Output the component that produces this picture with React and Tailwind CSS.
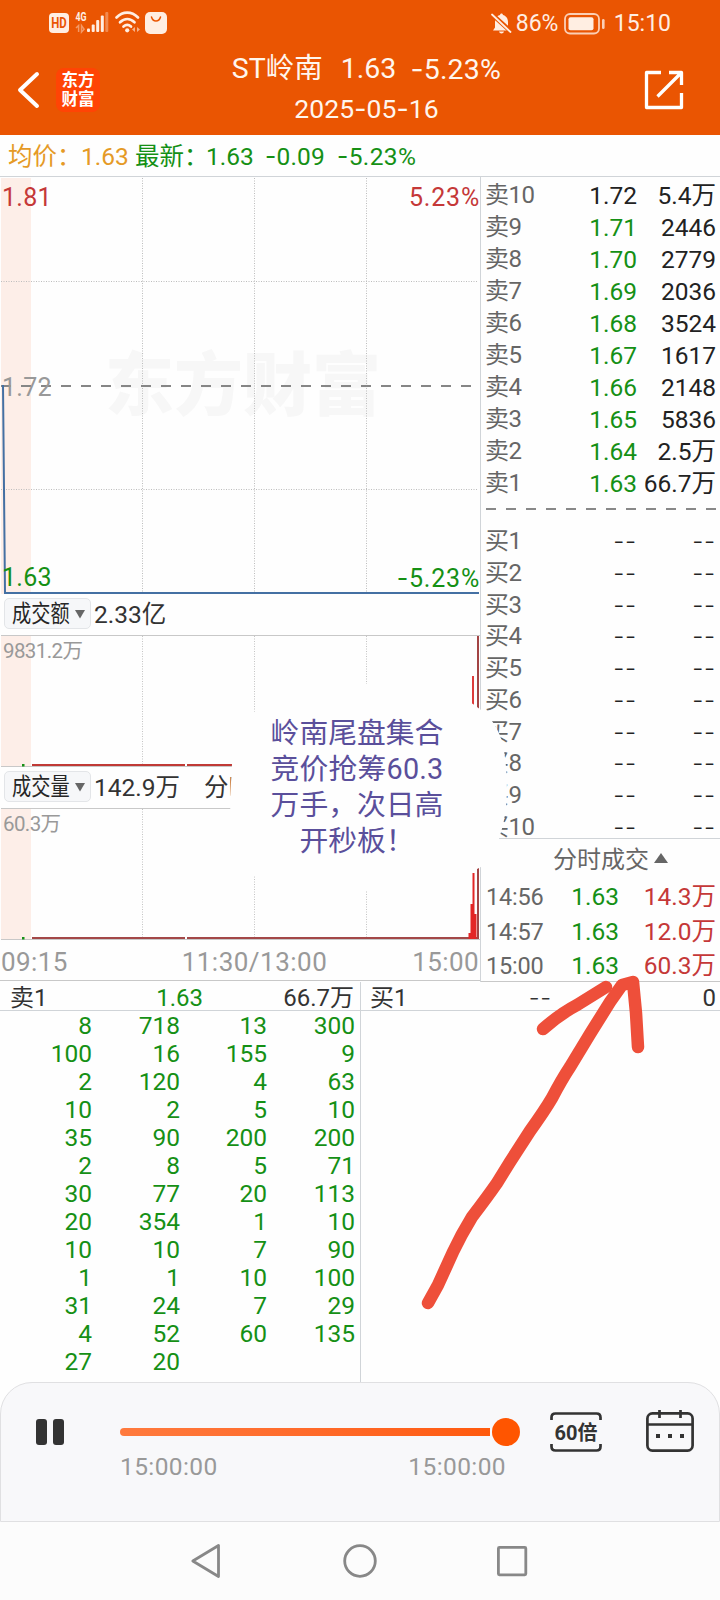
import React from "react";

const sells = [
  ["卖10", "1.72", "5.4万"], ["卖9", "1.71", "2446"], ["卖8", "1.70", "2779"],
  ["卖7", "1.69", "2036"], ["卖6", "1.68", "3524"], ["卖5", "1.67", "1617"],
  ["卖4", "1.66", "2148"], ["卖3", "1.65", "5836"], ["卖2", "1.64", "2.5万"],
  ["卖1", "1.63", "66.7万"],
];
const buys = ["买1", "买2", "买3", "买4", "买5", "买6", "买7", "买8", "买9", "买10"];
const trades = [["14:56", "1.63", "14.3万"], ["14:57", "1.63", "12.0万"], ["15:00", "1.63", "60.3万"]];
const queue = [
  [8, 718, 13, 300], [100, 16, 155, 9], [2, 120, 4, 63], [10, 2, 5, 10], [35, 90, 200, 200],
  [2, 8, 5, 71], [30, 77, 20, 113], [20, 354, 1, 10], [10, 10, 7, 90], [1, 1, 10, 100],
  [31, 24, 7, 29], [4, 52, 60, 135], [27, 20, "", ""],
];

function Dashes() {
  return <span className="font-['Inter',sans-serif] font-light tracking-[0.8px]">--</span>;
}

function Minus() {
  return <span className="font-['Inter',sans-serif]">-</span>;
}

function StatusBar() {
  return (
    <div className="flex h-[46px] items-center pl-[49px] pr-[49px] text-[#ffeee2]">
      <svg className="h-[46px] w-[120px]" viewBox="49 0 120 46">
        <rect x="49" y="13" width="20" height="20" rx="4" fill="#ffeee2" />
        <text x="59" y="28.2" textAnchor="middle" fontFamily="Roboto" fontWeight="700" fontSize="14" textLength="15.5" lengthAdjust="spacingAndGlyphs" fill="#ea5502">HD</text>
        <text x="75.5" y="20.8" fontFamily="Roboto" fontWeight="700" fontSize="12.5" textLength="11" lengthAdjust="spacingAndGlyphs" fill="#ffeee2">4G</text>
        <g fill="#ffeee2">
          <rect x="87" y="28.5" width="3" height="3.5" rx="1" />
          <rect x="91.7" y="24.5" width="3" height="7.5" rx="1" />
          <rect x="96.2" y="20" width="3" height="12" rx="1" />
          <rect x="100.8" y="15.5" width="3" height="16.5" rx="1" />
          <rect x="105.3" y="12" width="3" height="20" rx="1" opacity="0.35" />
        </g>
        <path d="M76 28l2.6-2.5v6.5M81.5 25.5v6.5l2.6-2.8z" fill="none" stroke="#ffeee2" strokeWidth="1.5" opacity="0.45" />
        <g fill="none" stroke="#ffeee2" strokeWidth="2.7" strokeLinecap="round">
          <path d="M116.5 17.5C123 11 131.5 11 138 17.5" />
          <path d="M120 22.3C124.5 18 130 18 134.5 22.3" />
          <path d="M123.5 26.5C126 24.3 128.5 24.3 131 26.5" />
        </g>
        <circle cx="127.2" cy="30.3" r="2.1" fill="#ffeee2" />
        <path d="M135 27v5l-3-2.5zM137 27v5l3-2.5z" fill="#ffeee2" opacity="0.6" />
        <rect x="145" y="12" width="22" height="22" rx="5" fill="#ffeee2" />
        <path d="M151.5 17c1.5 5.3 7.5 5.3 9 0" fill="none" stroke="#ea5502" strokeWidth="1.5" strokeLinecap="round" />
      </svg>
      <div className="ml-auto flex items-center">
        <svg className="h-[22px] w-[21px]" viewBox="0 0 21 22">
          <path d="M2 18.5h17l-2-3V10c0-4-2.5-6.3-5-6.9C12 1 9 1 9 3.1 6 3.7 4 6 4 10v5.5zM8 19.5h5c-.5 2.5-4.5 2.5-5 0z" fill="#ffeee2" />
          <path d="M.5 2l20 18" stroke="#ea5502" strokeWidth="4.5" />
          <path d="M1 2.5l18.5 17.5" stroke="#ffeee2" strokeWidth="1.8" strokeLinecap="round" />
        </svg>
        <span className="ml-[4px] w-[48px] whitespace-nowrap pt-px text-[23px] leading-[46px]">86%</span>
        <svg className="mt-px h-[22px] w-[42px]" viewBox="0 0 42 22">
          <rect x="1" y="1" width="34" height="19.5" rx="5" fill="none" stroke="#ffeee2" strokeOpacity="0.8" strokeWidth="1.8" />
          <rect x="4.5" y="4.3" width="25" height="13" rx="2" fill="#ffeee2" />
          <rect x="38" y="6" width="2.6" height="10" rx="1.3" fill="#ffeee2" fillOpacity="0.8" />
        </svg>
        <span className="ml-[8px] pt-px text-[23px] leading-[46px]">15:10</span>
      </div>
    </div>
  );
}

function Header() {
  return (
    <header className="h-[135px] shrink-0 bg-[#ea5502]">
      <StatusBar />
      <div className="flex h-[89px] items-start text-[#fff6ee]">
        <svg className="ml-[16px] mt-[24px] h-[40px] w-[26px]" viewBox="0 0 26 40">
          <path d="M21 4L4 20l17 16" fill="none" stroke="#fff" strokeWidth="4" strokeLinecap="round" strokeLinejoin="round" />
        </svg>
        <div className="ml-[14px] mt-[22px] flex h-[44px] w-[44px] shrink-0 flex-col items-center justify-center rounded-[8px] bg-[#ff4405] pb-px text-[16.5px] font-bold leading-[19px] text-white">
          <span>东方</span>
          <span>财富</span>
        </div>
        <div className="flex flex-1 flex-col items-center pr-[11px]">
          <div className="mt-[4px] flex whitespace-pre text-[28.5px] leading-[38px]">
            <span>ST岭南</span>
            <span className="ml-[18px]">1.63</span>
            <span className="ml-[14px] tracking-[0.2px]"><Minus />5.23%</span>
          </div>
          <div className="text-[26.5px] leading-[39px] tracking-[0.1px]">2025<Minus />05<Minus />16</div>
        </div>
        <svg className="mr-[36px] mt-[24px] h-[40px] w-[40px]" viewBox="0 0 40 40">
          <path d="M17 2.5H2.5v35h35V23M25 2.5h12.5V15M36.5 3.5L13.5 26.5" fill="none" stroke="#fff" strokeWidth="3.3" strokeLinejoin="round" />
        </svg>
      </div>
    </header>
  );
}

function Dropdown({ label }) {
  return (
    <div className="flex h-[31px] w-[87px] items-center rounded-[5px] border border-[#e3e5e8] bg-[#f6f7f9] pl-[7px]">
      <span className="w-[58px] whitespace-nowrap pt-[2px] text-[24px] leading-[29px] text-[#262626]">
        <span className="inline-block origin-left scale-x-[0.8]">{label}</span>
      </span>
      <svg className="ml-[5px] mt-px h-[9px] w-[10px] shrink-0" viewBox="0 0 10 9"><path d="M0 0h10L5 8.5z" fill="#666" /></svg>
    </div>
  );
}

function PriceChart() {
  return (
    <div className="relative h-[417px] text-[25px] leading-[30px]">
      <svg className="block h-[417px] w-[480px]" viewBox="0 177 480 417">
        <rect x="1" y="178" width="30" height="416" fill="#fdeee8" />
        <text x="243" y="410" textAnchor="middle" fontFamily="'Noto Sans CJK SC', sans-serif" fontWeight="900" fontSize="69" fill="#f7f7f7">东方财富</text>
        <g stroke="#bdbdbd" strokeWidth="1" strokeDasharray="1 1.5">
          <path d="M142.5 178V593M254.5 178V593M366.5 178V593M1 281.5H478M1 489.5H478" />
        </g>
        <path d="M1 386H472" stroke="#868686" strokeWidth="2" strokeDasharray="10 10" />
        <path d="M3 385L5 593H479" fill="none" stroke="#4470a3" strokeWidth="2" />
      </svg>
      <span className="absolute left-[2px] top-[6px] tracking-[0.3px] text-[#c53838]">1.81</span>
      <span className="absolute right-0 top-[6px] tracking-[0.8px] text-[#c53838]">5.23%</span>
      <span className="absolute left-[2px] top-[196px] tracking-[0.3px] text-[#999]">1.72</span>
      <span className="absolute left-[2px] top-[386px] tracking-[0.3px] text-[#159015]">1.63</span>
      <span className="absolute right-0 top-[386px] tracking-[0.8px] text-[#159015]"><Minus />5.23%</span>
    </div>
  );
}

function VolumeChart({ max, line, children }) {
  return (
    <div className="relative h-[132px]">
      <svg className="block h-[132px] w-[480px]" viewBox="0 0 480 132">
        <rect x="1" y="1" width="30" height="131" fill="#fdeee8" />
        <path d="M1 .5H480M1 131.5H480" stroke="#c8c8c8" />
        <path d="M142.5 1V130M254.5 1V130M366.5 1V130" stroke="#c4c4c4" strokeDasharray="1 1.5" />
        <path d="M32 130H185M187 130H479" stroke={line} strokeWidth="2" />
        <rect x="22" y="129" width="2.5" height="2.5" fill="#159015" />
        {children}
      </svg>
      <span className="absolute left-[3px] top-[3px] text-[20.5px] leading-[26px] tracking-[-0.6px] text-[#999]">{max}</span>
    </div>
  );
}

function LeftColumn() {
  return (
    <section className="flex w-[480px] shrink-0 flex-col">
      <PriceChart />
      <div className="flex h-[41px] items-start pl-[4px] pt-[4px]">
        <Dropdown label="成交额" />
        <span className="ml-[3px] pt-px text-[24.5px] leading-[32px] text-[#333]">2.33亿</span>
      </div>
      <VolumeChart max="9831.2万" line="#c03a36">
        <rect x="472" y="41" width="2" height="60" fill="#dd3b3b" />
        <rect x="477" y="1" width="2" height="130" fill="#a34444" />
      </VolumeChart>
      <div className="flex h-[41px] items-start pl-[4px] pt-[4px]">
        <Dropdown label="成交量" />
        <span className="ml-[3px] pt-px text-[24.5px] leading-[32px] text-[#333]">142.9万</span>
        <span className="ml-[24px] pt-px text-[24.5px] leading-[32px] text-[#333]">分时</span>
      </div>
      <VolumeChart max="60.3万" line="#a34848">
        <path d="M469.5 125V131M471.5 96V131M473.5 65V131M475.5 106V131" stroke="#e32626" strokeWidth="2" />
        <rect x="477" y="30" width="2" height="101" fill="#a34444" />
      </VolumeChart>
      <div className="flex h-[41px] justify-between border-b border-[#c8c8c8] pl-px pr-px text-[26px] leading-[44px] tracking-[0.4px] text-[#999]">
        <span>09:15</span>
        <span className="pl-[29px] tracking-[0.5px]">11:30/13:00</span>
        <span>15:00</span>
      </div>
    </section>
  );
}

function RightColumn() {
  return (
    <section className="flex flex-1 flex-col border-l border-[#d0d4d8] text-[24.5px] text-[#222]">
      <div className="flex flex-col pt-[2px]">
        {sells.map(([n, p, q], i) => (
          <div key={n} className="flex h-[32px] items-center pl-[4px] pr-[4px] pt-px leading-[31px]">
            <span className="w-[70px] text-[24px] tracking-[-0.5px] text-[#666]">{n}</span>
            <span className={i === 0 ? "w-[82px] text-right" : "w-[82px] text-right text-[#159015]"}>{p}</span>
            <span className="flex-1 text-right">{q}</span>
          </div>
        ))}
      </div>
      <svg className="ml-[5px] mt-[9px] h-[2px] w-[230px] shrink-0" viewBox="0 0 230 2"><path d="M0 1H230" stroke="#888" strokeWidth="2" strokeDasharray="10 10" /></svg>
      <div className="mt-[15px] flex shrink-0 flex-col">
        {buys.map((n) => (
          <div key={n} className="flex h-[31.8px] items-center pl-[4px] pr-[4px] leading-[32px]">
            <span className="w-[70px] text-[24px] tracking-[-0.5px] text-[#666]">{n}</span>
            <span className="w-[82px] pt-px text-right"><Dashes /></span>
            <span className="flex-1 pt-px text-right"><Dashes /></span>
          </div>
        ))}
      </div>
      <div className="-mt-[5px] flex h-[40px] shrink-0 items-center justify-center border-t border-[#d0d4d8] pl-[20px] text-[24px] text-[#666]">
        <span className="pt-[3px]">分时成交</span>
        <svg className="ml-[5px] h-[10px] w-[14px]" viewBox="0 0 14 10"><path d="M7 0l7 10H0z" fill="#666" /></svg>
      </div>
      <div className="flex min-h-0 flex-1 flex-col border-b border-[#c8c8c8] pt-[2px]">
        {trades.map(([t, p, q]) => (
          <div key={t} className="flex h-[34.4px] shrink-0 items-center pl-[5px] pr-[4px] leading-[34px]">
            <span className="w-[70px] text-[23.5px] tracking-[-0.2px] text-[#666]">{t}</span>
            <span className="w-[63px] text-right text-[#159015]">{p}</span>
            <span className="flex-1 text-right text-[#c53838]">{q}</span>
          </div>
        ))}
      </div>
    </section>
  );
}

function Queue() {
  return (
    <section className="flex h-[400px] shrink-0 text-[24.5px]">
      <div className="flex w-[361px] flex-col border-r border-[#d0d4d8]">
        <div className="flex h-[29px] items-center border-b border-[#d0d4d8] pl-[10px] pr-[6px] pt-[3px] text-[24px] leading-[28px] text-[#333]">
          <span className="w-[70px]">卖1</span>
          <span className="w-[123px] text-right text-[#159015]">1.63</span>
          <span className="flex-1 text-right">66.7万</span>
        </div>
        <div className="flex flex-col pt-px text-[#159015]">
          {queue.map((r, i) => (
            <div key={i} className="grid h-[28px] grid-cols-[92px_88px_87px_88px] text-right leading-[28px]">
              {r.map((v, j) => <span key={j}>{v}</span>)}
            </div>
          ))}
        </div>
      </div>
      <div className="flex-1">
        <div className="flex h-[29px] items-center border-b border-[#d0d4d8] pl-[9px] pr-[4px] pt-[3px] text-[24px] leading-[28px] text-[#333]">
          <span className="w-[70px]">买1</span>
          <span className="w-[112px] text-right"><Dashes /></span>
          <span className="flex-1 text-right">0</span>
        </div>
      </div>
    </section>
  );
}

function Player() {
  return (
    <section className="flex h-[140px] shrink-0 items-start rounded-t-[32px] border border-[#e0e0e2] bg-[#f8f8fa]">
      <div className="ml-[35px] mt-[36px] flex gap-[6px]">
        <span className="h-[26px] w-[11px] rounded-[3px] bg-[#333]" />
        <span className="h-[26px] w-[11px] rounded-[3px] bg-[#333]" />
      </div>
      <div className="ml-[56px] mt-[35px] w-[400px]">
        <div className="flex h-[28px] items-center">
          <span className="h-[8px] w-[370px] rounded-l-full bg-linear-to-r from-[#ff7a3d] to-[#ff5a0c]" />
          <span className="ml-[2px] h-[28px] w-[28px] rounded-full bg-[#ff5500]" />
        </div>
        <div className="mt-[5px] flex w-[386px] justify-between text-[24.5px] leading-[32px] tracking-[0.4px] text-[#999]">
          <span>15:00:00</span>
          <span>15:00:00</span>
        </div>
      </div>
      <svg className="ml-[29px] mt-[28px] h-[42px] w-[54px]" viewBox="549 1411 54 42">
        <path d="M551.5 1420V1417.5Q551.5 1413.5 555.5 1413.5H596.5Q600.5 1413.5 600.5 1417.5V1420M551.5 1444V1446.5Q551.5 1450.5 555.5 1450.5H596.5Q600.5 1450.5 600.5 1446.5V1444" fill="none" stroke="#333" strokeWidth="2.7" />
        <text x="576" y="1440" textAnchor="middle" fontFamily="Roboto, 'Noto Sans CJK SC', sans-serif" fontWeight="700" fontSize="20" textLength="43" lengthAdjust="spacingAndGlyphs" fill="#333">60倍</text>
      </svg>
      <svg className="ml-[42px] mt-[26px] h-[44px] w-[50px]" viewBox="645 1409 50 44">
        <g fill="none" stroke="#333" strokeWidth="2.7">
          <rect x="647.4" y="1413.4" width="45.2" height="37.2" rx="5" />
          <path d="M647 1424.500H693M659.500 1410V1418M680.500 1410V1418" />
        </g>
        <path d="M656 1434h4v4h-4zM668 1434h4v4h-4zM680 1434h4v4h-4z" fill="#333" />
      </svg>
    </section>
  );
}

function NavBar() {
  return (
    <nav className="h-[79px] bg-[#fcfcfc]">
      <svg className="block h-[78px] w-[720px]" viewBox="0 1522 720 78" fill="none" stroke="#888" strokeWidth="2.8" strokeLinejoin="round">
        <path d="M192.8 1561L218.5 1545.5V1576.5Z" />
        <circle cx="360" cy="1561" r="15.3" />
        <rect x="498.4" y="1547.4" width="27.4" height="27.4" rx="1" />
      </svg>
    </nav>
  );
}

export default function App() {
  return (
    <div className="relative flex h-[1600px] w-[720px] flex-col overflow-hidden bg-[#fefefe] font-['Roboto','Noto_Sans_CJK_SC',sans-serif]">
      <Header />
      <div className="flex h-[42px] shrink-0 items-center whitespace-nowrap border-b border-[#d0d4d8] pl-[8px] pt-[2px] text-[24.5px] leading-[40px] text-[#159015]">
        <span className="w-[73px] text-[#e59a26]">均价：</span>
        <span className="w-[54px] text-[#e59a26]">1.63</span>
        <span className="w-[71px]">最新：</span>
        <span className="w-[59px]">1.63</span>
        <span className="w-[72px] tracking-[0.2px]"><Minus />0.09</span>
        <span className="tracking-[0.4px]"><Minus />5.23%</span>
      </div>
      <main className="flex h-[805px] shrink-0">
        <LeftColumn />
        <RightColumn />
      </main>
      <Queue />
      <Player />
      <NavBar />

      <div className="absolute left-[228px] top-[682px] h-[212px] w-[278px]">
        <svg className="absolute inset-0 h-[212px] w-[280px]" viewBox="228 682 280 212">
          <path d="M230 800L232 764Q238 730 254 712Q290 684 366 684Q440 684 473 704L481 710Q497 722 503 745Q507 765 507 790Q507 815 499 839Q492 862 479 868Q440 891 366 891Q290 891 254 876Q230 850 230 800Z" fill="#fefefe" />
        </svg>
        <div className="relative flex flex-col items-center pr-[20px] pt-[33px] text-[28.8px] leading-[36px] text-[#5a4f9b]">
          <span>岭南尾盘集合</span>
          <span className="tracking-[0.2px]">竞价抢筹60.3</span>
          <span>万手，次日高</span>
          <span>开秒板！</span>
        </div>
      </div>
      <svg className="absolute left-[415px] top-[970px] h-[345px] w-[240px]" viewBox="415 970 240 345" fill="none" stroke="#ee4f3a" strokeWidth="12.5" strokeLinecap="round" strokeLinejoin="round">
        <path d="M428 1303L438 1285L453 1252Q461 1235 472 1217Q488 1196 497 1183L510 1162L530 1131Q545 1110 552 1098Q562 1079 570 1067L590 1034L610 1002L622 985L633 982L636 1013L638 1047" />
        <path d="M543 1029Q560 1014 577 1005L606 987" />
      </svg>
    </div>
  );
}
